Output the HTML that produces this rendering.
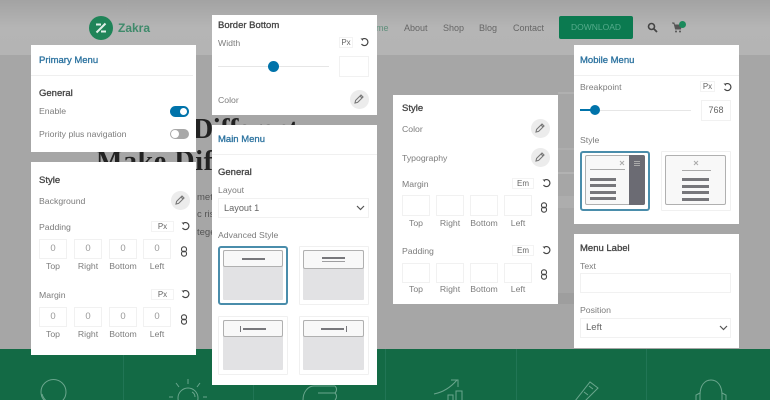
<!DOCTYPE html>
<html><head><meta charset="utf-8">
<style>
html,body{margin:0;padding:0}
body{width:770px;height:400px;position:relative;overflow:hidden;background:#a6a6a6;font-family:"Liberation Sans",sans-serif}
#w{position:absolute;left:0;top:0;width:770px;height:400px;overflow:hidden;filter:blur(.35px)}
#w div,#w svg{position:absolute}
.t{white-space:nowrap;line-height:12px;height:12px;font-size:8.7px;color:#7c7c7c;margin-top:1px}
.h{font-size:9.500px;color:#444;-webkit-text-stroke:.3px #444}
.b{font-size:9.500px;color:#2b729f;-webkit-text-stroke:.3px #2b729f}
.l{font-size:8.7px;color:#7c7c7c;text-align:center;width:34px}
.p{background:#fff}
.i{background:#fff;border:1px solid #f1f1f1;box-sizing:border-box;font-size:9.500px;color:#999;text-align:center}
.u{background:#fff;border:1px solid #f3f3f3;box-sizing:border-box;font-size:8px;color:#666;text-align:center;line-height:9px}
.c{box-sizing:border-box;border:1px solid #f0f0f0;background:#fff;border-radius:1px}
.s{box-sizing:border-box;border:2px solid #4a8dab;background:#fff;border-radius:3px}
.g{background:#e2e2e4;border-radius:1px}
.m{background:#f8f8f8;box-sizing:border-box;border:1px solid #b0b0b0;border-radius:2px}
.d{background:#77777b}
.pk{width:19px;height:19px;border-radius:50%;background:#ececec}
.nav{font-size:9px;color:#666;line-height:12px;white-space:nowrap;margin-top:1px}
</style></head><body>
<div id="w">
<!-- header -->
<div style="left:0;top:0;width:770px;height:55px;background:linear-gradient(#a3a3a3,#b5b5b5 50%,#b4b4b4)"></div>
<div style="left:89px;top:16px;width:24px;height:24px;border-radius:50%;background:#1f8458"></div>
<svg style="left:89px;top:16px" width="24" height="24" viewBox="0 0 24 24"><path d="M7 8.500h5M16.500 7.500L7.500 16.500M12 15.500h5" stroke="#dff0e8" stroke-width="2" fill="none"/></svg>
<div class="t" style="left:118px;top:20px;font-size:12px;line-height:14px;height:14px;font-weight:bold;color:#3f8a6b">Zakra</div>
<div class="nav" style="left:376px;top:21px;color:#5f8f7b">me</div>
<div class="nav" style="left:404px;top:21px">About</div>
<div class="nav" style="left:443px;top:21px">Shop</div>
<div class="nav" style="left:479px;top:21px">Blog</div>
<div class="nav" style="left:513px;top:21px">Contact</div>
<div style="left:559px;top:16px;width:74px;height:23px;background:#0b7a50;border-radius:2px;color:#55ab8b;font-size:8.500px;line-height:23px;text-align:center">DOWNLOAD</div>
<svg style="left:647px;top:22px" width="11" height="11" viewBox="0 0 11 11"><circle cx="4.500" cy="4.500" r="3" fill="none" stroke="#444" stroke-width="1.600"/><path d="M7 7l3 3" stroke="#444" stroke-width="1.800"/></svg>
<svg style="left:672px;top:22px" width="11" height="11" viewBox="0 0 11 11"><path d="M0 1h2l1.500 6h5l1-4H3" fill="#555" stroke="#555"/><circle cx="4" cy="9.500" r="1" fill="#555"/><circle cx="8" cy="9.500" r="1" fill="#555"/></svg>
<div style="left:679px;top:21px;width:7px;height:7px;border-radius:50%;background:#1b8a5c"></div>
<!-- hero text -->
<div class="t" style="left:193px;top:115px;font:bold 28px/28px 'Liberation Serif',serif;height:28px;color:#222;letter-spacing:-.4px">Different</div>
<div class="t" style="left:96px;top:147px;font:bold 28px/28px 'Liberation Serif',serif;height:28px;color:#222;letter-spacing:.6px">Make Different</div>
<div class="t" style="left:197px;top:191px;color:#555;font-size:9.500px">met.</div>
<div class="t" style="left:197px;top:208px;color:#555;font-size:9.500px">c risus</div>
<div class="t" style="left:197px;top:226px;color:#555;font-size:9.500px">tegestas</div>
<div style="left:558px;top:92px;width:16px;height:2px;background:#b0b0b0"></div>
<div style="left:558px;top:148px;width:16px;height:2px;background:#adadad"></div>
<div style="left:558px;top:172px;width:16px;height:2px;background:#b2b2b2"></div>
<div style="left:558px;top:196px;width:16px;height:12px;background:#adadad"></div>
<div style="left:558px;top:293px;width:16px;height:11px;background:#9e9e9e"></div>
<!-- green band -->
<div style="left:0;top:349px;width:770px;height:51px;background:#136a45"></div>
<div style="left:123px;top:349px;width:1px;height:51px;background:#217555"></div>
<div style="left:253px;top:349px;width:1px;height:51px;background:#217555"></div>
<div style="left:385px;top:349px;width:1px;height:51px;background:#217555"></div>
<div style="left:516px;top:349px;width:1px;height:51px;background:#217555"></div>
<div style="left:646px;top:349px;width:1px;height:51px;background:#217555"></div>
<svg style="left:0;top:349px" width="770" height="51" viewBox="0 349 770 51" fill="none" stroke="#6aa68d" stroke-width="1">
<circle cx="53.500" cy="392" r="12.500"/><path d="M42 394c1 4 4 7 7 9"/>
<circle cx="188" cy="398" r="10"/><path d="M188 379v5M176 383l3 4M200 383l-3 4M173 397h-4M203 397h4M192 392c2 1 3 3 3 5"/>
<path d="M335 386h-21c-6 0-11 6-11 14M335 386c2 2 2 5 0 7M318 393h17c2 2 2 5 0 7"/>
<path d="M434 394c10-2 17-7 23-14M451 380h7v7M448 402v-7h5v7M456 402v-11h6v11"/>
<path d="M575 401l15-19 8 6-14 14M584 392l4 3M589 386l4 3"/>
<path d="M700 402v-7c0-10 5-15 11-15s11 5 11 15v7M696 402v-7l4-2M726 402v-7l-4-2"/>
</svg>

<!-- Panel 1 -->
<div class="p" style="left:31px;top:45px;width:165px;height:107px"></div>
<div class="t b" style="left:39px;top:54px">Primary Menu</div>
<div style="left:31px;top:75px;width:162px;height:1px;background:#efefef"></div>
<div class="t h" style="left:39px;top:87px">General</div>
<div class="t" style="left:39px;top:104px">Enable</div>
<div style="left:170px;top:106px;width:19px;height:11px;border-radius:6px;background:#0073aa"></div>
<div style="left:180px;top:108px;width:7px;height:7px;border-radius:50%;background:#fff"></div>
<div class="t" style="left:39px;top:127px">Priority plus navigation</div>
<div style="left:170px;top:129px;width:19px;height:10px;border-radius:5px;background:#a8a8a8"></div>
<div style="left:171px;top:130px;width:8px;height:8px;border-radius:50%;background:#fff"></div>

<!-- Panel 2 -->
<div class="p" style="left:31px;top:162px;width:165px;height:193px"></div>
<div class="t h" style="left:39px;top:174px">Style</div>
<div class="t" style="left:39px;top:194px">Background</div>
<div class="pk" style="left:171px;top:191px"></div>
<svg style="left:175px;top:195px" width="10" height="10" viewBox="0 0 10 10"><path d="M1 9l.6-2.600L7 1l2 2-5.400 5.400zM6 2l2 2" fill="none" stroke="#777" stroke-width="1.100"/></svg>
<div class="t" style="left:39px;top:220px">Padding</div>
<div class="u" style="left:151px;top:221px;width:23px;height:11px">Px</div>
<svg style="left:181px;top:222px" width="9" height="9" viewBox="0 0 9 9"><path d="M2 1.500A3.500 3.500 0 1 1 1.500 6" fill="none" stroke="#444" stroke-width="1.200"/><path d="M.5 .5h2.500v2.500" fill="#444"/></svg>
<div class="i" style="left:39px;top:239px;width:28px;height:20px;line-height:18px">0</div>
<div class="i" style="left:74px;top:239px;width:28px;height:20px;line-height:18px">0</div>
<div class="i" style="left:109px;top:239px;width:28px;height:20px;line-height:18px">0</div>
<div class="i" style="left:143px;top:239px;width:28px;height:20px;line-height:18px">0</div>
<svg style="left:180px;top:246px" width="8" height="11" viewBox="0 0 8 11"><rect x="1.500" y=".8" width="5" height="5" rx="2.300" fill="none" stroke="#444" stroke-width="1.100"/><rect x="1.500" y="5.200" width="5" height="5" rx="2.300" fill="none" stroke="#444" stroke-width="1.100"/></svg>
<div class="t l" style="left:36px;top:259px">Top</div>
<div class="t l" style="left:71px;top:259px">Right</div>
<div class="t l" style="left:106px;top:259px">Bottom</div>
<div class="t l" style="left:140px;top:259px">Left</div>
<div class="t" style="left:39px;top:288px">Margin</div>
<div class="u" style="left:151px;top:289px;width:23px;height:11px">Px</div>
<svg style="left:181px;top:290px" width="9" height="9" viewBox="0 0 9 9"><path d="M2 1.500A3.500 3.500 0 1 1 1.500 6" fill="none" stroke="#444" stroke-width="1.200"/><path d="M.5 .5h2.500v2.500" fill="#444"/></svg>
<div class="i" style="left:39px;top:307px;width:28px;height:20px;line-height:18px">0</div>
<div class="i" style="left:74px;top:307px;width:28px;height:20px;line-height:18px">0</div>
<div class="i" style="left:109px;top:307px;width:28px;height:20px;line-height:18px">0</div>
<div class="i" style="left:143px;top:307px;width:28px;height:20px;line-height:18px">0</div>
<svg style="left:180px;top:314px" width="8" height="11" viewBox="0 0 8 11"><rect x="1.500" y=".8" width="5" height="5" rx="2.300" fill="none" stroke="#444" stroke-width="1.100"/><rect x="1.500" y="5.200" width="5" height="5" rx="2.300" fill="none" stroke="#444" stroke-width="1.100"/></svg>
<div class="t l" style="left:36px;top:327px">Top</div>
<div class="t l" style="left:71px;top:327px">Right</div>
<div class="t l" style="left:106px;top:327px">Bottom</div>
<div class="t l" style="left:140px;top:327px">Left</div>

<!-- Panel 3 -->
<div class="p" style="left:212px;top:15px;width:165px;height:100px"></div>
<div class="t h" style="left:218px;top:19px">Border Bottom</div>
<div class="t" style="left:218px;top:36px">Width</div>
<div class="u" style="left:339px;top:37px;width:14px;height:11px">Px</div>
<svg style="left:360px;top:38px" width="9" height="9" viewBox="0 0 9 9"><path d="M2 1.500A3.500 3.500 0 1 1 1.500 6" fill="none" stroke="#444" stroke-width="1.200"/><path d="M.5 .5h2.500v2.500" fill="#444"/></svg>
<div style="left:218px;top:66px;width:111px;height:1px;background:#e6e6e6"></div>
<div style="left:268px;top:61px;width:11px;height:11px;border-radius:50%;background:#0073aa"></div>
<div class="i" style="left:339px;top:56px;width:30px;height:21px"></div>
<div class="t" style="left:218px;top:93px">Color</div>
<div class="pk" style="left:349.500px;top:90px"></div>
<svg style="left:354px;top:94px" width="10" height="10" viewBox="0 0 10 10"><path d="M1 9l.6-2.600L7 1l2 2-5.400 5.400zM6 2l2 2" fill="none" stroke="#777" stroke-width="1.100"/></svg>

<!-- Panel 4 -->
<div class="p" style="left:212px;top:125px;width:165px;height:260px"></div>
<div class="t b" style="left:218px;top:133px">Main Menu</div>
<div style="left:212px;top:154px;width:165px;height:1px;background:#f0f0f0"></div>
<div class="t h" style="left:218px;top:166px">General</div>
<div class="t" style="left:218px;top:183px">Layout</div>
<div class="i" style="left:218px;top:198px;width:151px;height:20px"></div>
<div class="t" style="left:224px;top:201px;font-size:9.200px;color:#666">Layout 1</div>
<svg style="left:356px;top:205px" width="9" height="6" viewBox="0 0 9 6"><path d="M1 1l3.500 3.500L8 1" fill="none" stroke="#555" stroke-width="1.200"/></svg>
<div class="t" style="left:218px;top:228px">Advanced Style</div>

<div class="s" style="left:218px;top:246px;width:70px;height:59px"></div>
<div class="g" style="left:223px;top:250px;width:60px;height:50px"></div>
<div class="m" style="left:223px;top:250px;width:60px;height:17px"></div>
<div class="d" style="left:242px;top:258px;width:23px;height:2px"></div>

<div class="c" style="left:299px;top:246px;width:70px;height:59px"></div>
<div class="g" style="left:303px;top:250px;width:61px;height:50px"></div>
<div class="m" style="left:303px;top:250px;width:61px;height:19px"></div>
<div class="d" style="left:322px;top:257px;width:23px;height:2px"></div>
<div class="d" style="left:322px;top:261px;width:23px;height:1px;opacity:.7"></div>

<div class="c" style="left:218px;top:316px;width:70px;height:59px"></div>
<div class="g" style="left:223px;top:320px;width:60px;height:50px"></div>
<div class="m" style="left:223px;top:320px;width:60px;height:17px"></div>
<div class="d" style="left:240px;top:326px;width:1px;height:6px"></div>
<div class="d" style="left:243px;top:328px;width:23px;height:2px"></div>

<div class="c" style="left:299px;top:316px;width:70px;height:59px"></div>
<div class="g" style="left:303px;top:320px;width:61px;height:50px"></div>
<div class="m" style="left:303px;top:320px;width:61px;height:17px"></div>
<div class="d" style="left:321px;top:328px;width:23px;height:2px"></div>
<div class="d" style="left:346px;top:326px;width:1px;height:6px"></div>

<!-- Panel 5 -->
<div class="p" style="left:393px;top:95px;width:165px;height:209px"></div>
<div class="t h" style="left:402px;top:102px">Style</div>
<div class="t" style="left:402px;top:122px">Color</div>
<div class="pk" style="left:531px;top:119px"></div>
<svg style="left:535px;top:123px" width="10" height="10" viewBox="0 0 10 10"><path d="M1 9l.6-2.600L7 1l2 2-5.400 5.400zM6 2l2 2" fill="none" stroke="#777" stroke-width="1.100"/></svg>
<div class="t" style="left:402px;top:151px">Typography</div>
<div class="pk" style="left:531px;top:148px"></div>
<svg style="left:535px;top:152px" width="10" height="10" viewBox="0 0 10 10"><path d="M1 9l.6-2.600L7 1l2 2-5.400 5.400zM6 2l2 2" fill="none" stroke="#777" stroke-width="1.100"/></svg>
<div class="t" style="left:402px;top:177px">Margin</div>
<div class="u" style="left:512px;top:178px;width:22px;height:11px">Em</div>
<svg style="left:542px;top:179px" width="9" height="9" viewBox="0 0 9 9"><path d="M2 1.500A3.500 3.500 0 1 1 1.500 6" fill="none" stroke="#444" stroke-width="1.200"/><path d="M.5 .5h2.500v2.500" fill="#444"/></svg>
<div class="i" style="left:402px;top:195px;width:28px;height:21px"></div>
<div class="i" style="left:436px;top:195px;width:28px;height:21px"></div>
<div class="i" style="left:470px;top:195px;width:28px;height:21px"></div>
<div class="i" style="left:504px;top:195px;width:28px;height:21px"></div>
<svg style="left:540px;top:202px" width="8" height="11" viewBox="0 0 8 11"><rect x="1.500" y=".8" width="5" height="5" rx="2.300" fill="none" stroke="#444" stroke-width="1.100"/><rect x="1.500" y="5.200" width="5" height="5" rx="2.300" fill="none" stroke="#444" stroke-width="1.100"/></svg>
<div class="t l" style="left:399px;top:216px">Top</div>
<div class="t l" style="left:433px;top:216px">Right</div>
<div class="t l" style="left:467px;top:216px">Bottom</div>
<div class="t l" style="left:501px;top:216px">Left</div>
<div class="t" style="left:402px;top:244px">Padding</div>
<div class="u" style="left:512px;top:245px;width:22px;height:11px">Em</div>
<svg style="left:542px;top:246px" width="9" height="9" viewBox="0 0 9 9"><path d="M2 1.500A3.500 3.500 0 1 1 1.500 6" fill="none" stroke="#444" stroke-width="1.200"/><path d="M.5 .5h2.500v2.500" fill="#444"/></svg>
<div class="i" style="left:402px;top:263px;width:28px;height:20px"></div>
<div class="i" style="left:436px;top:263px;width:28px;height:20px"></div>
<div class="i" style="left:470px;top:263px;width:28px;height:20px"></div>
<div class="i" style="left:504px;top:263px;width:28px;height:20px"></div>
<svg style="left:540px;top:269px" width="8" height="11" viewBox="0 0 8 11"><rect x="1.500" y=".8" width="5" height="5" rx="2.300" fill="none" stroke="#444" stroke-width="1.100"/><rect x="1.500" y="5.200" width="5" height="5" rx="2.300" fill="none" stroke="#444" stroke-width="1.100"/></svg>
<div class="t l" style="left:399px;top:282px">Top</div>
<div class="t l" style="left:433px;top:282px">Right</div>
<div class="t l" style="left:467px;top:282px">Bottom</div>
<div class="t l" style="left:501px;top:282px">Left</div>

<!-- Panel 6 -->
<div class="p" style="left:574px;top:45px;width:165px;height:179px"></div>
<div class="t b" style="left:580px;top:54px">Mobile Menu</div>
<div style="left:574px;top:75px;width:165px;height:1px;background:#f0f0f0"></div>
<div class="t" style="left:580px;top:80px">Breakpoint</div>
<div class="u" style="left:700px;top:81px;width:15px;height:11px">Px</div>
<svg style="left:723px;top:83px" width="9" height="9" viewBox="0 0 9 9"><path d="M2 1.500A3.500 3.500 0 1 1 1.500 6" fill="none" stroke="#444" stroke-width="1.200"/><path d="M.5 .5h2.500v2.500" fill="#444"/></svg>
<div style="left:580px;top:110px;width:111px;height:1px;background:#e6e6e6"></div>
<div style="left:580px;top:109px;width:15px;height:2px;background:#0073aa"></div>
<div style="left:590px;top:105px;width:10px;height:10px;border-radius:50%;background:#0073aa"></div>
<div class="i" style="left:701px;top:100px;width:30px;height:21px;line-height:19px;font-size:9px;color:#666">768</div>
<div class="t" style="left:580px;top:133px">Style</div>
<div class="s" style="left:580px;top:151px;width:70px;height:60px"></div>
<div class="m" style="left:585px;top:155px;width:60px;height:50px"></div>
<div style="left:629px;top:155px;width:16px;height:50px;background:#6b6b73;border-radius:0 2px 2px 0"></div>
<div style="left:634px;top:161px;width:6px;height:1px;background:#aaa"></div>
<div style="left:634px;top:163px;width:6px;height:1px;background:#aaa"></div>
<div style="left:634px;top:165px;width:6px;height:1px;background:#aaa"></div>
<svg style="left:619px;top:160px" width="6" height="6" viewBox="0 0 6 6"><path d="M1 1l4 4M5 1L1 5" stroke="#aaa" stroke-width="1"/></svg>
<div style="left:590px;top:169px;width:35px;height:1px;background:#aaa"></div>
<div class="d" style="left:590px;top:178px;width:26px;height:3px"></div>
<div class="d" style="left:590px;top:184px;width:26px;height:3px"></div>
<div class="d" style="left:590px;top:191px;width:26px;height:3px"></div>
<div class="d" style="left:590px;top:197px;width:26px;height:3px"></div>
<div class="c" style="left:661px;top:151px;width:70px;height:60px"></div>
<div class="m" style="left:665px;top:155px;width:61px;height:50px"></div>
<svg style="left:693px;top:160px" width="6" height="6" viewBox="0 0 6 6"><path d="M1 1l4 4M5 1L1 5" stroke="#aaa" stroke-width="1"/></svg>
<div style="left:682px;top:170px;width:29px;height:1px;background:#aaa"></div>
<div class="d" style="left:682px;top:178px;width:27px;height:3px"></div>
<div class="d" style="left:682px;top:185px;width:27px;height:3px"></div>
<div class="d" style="left:682px;top:191px;width:27px;height:3px"></div>
<div class="d" style="left:682px;top:198px;width:27px;height:3px"></div>

<!-- Panel 7 -->
<div class="p" style="left:574px;top:234px;width:165px;height:114px"></div>
<div class="t h" style="left:580px;top:242px">Menu Label</div>
<div class="t" style="left:580px;top:259px">Text</div>
<div class="i" style="left:580px;top:273px;width:151px;height:20px"></div>
<div class="t" style="left:580px;top:303px">Position</div>
<div class="i" style="left:580px;top:318px;width:151px;height:20px"></div>
<div class="t" style="left:586px;top:321px;font-size:9.500px;color:#666">Left</div>
<svg style="left:719px;top:325px" width="9" height="6" viewBox="0 0 9 6"><path d="M1 1l3.500 3.500L8 1" fill="none" stroke="#555" stroke-width="1.200"/></svg>
</div>
</body></html>
